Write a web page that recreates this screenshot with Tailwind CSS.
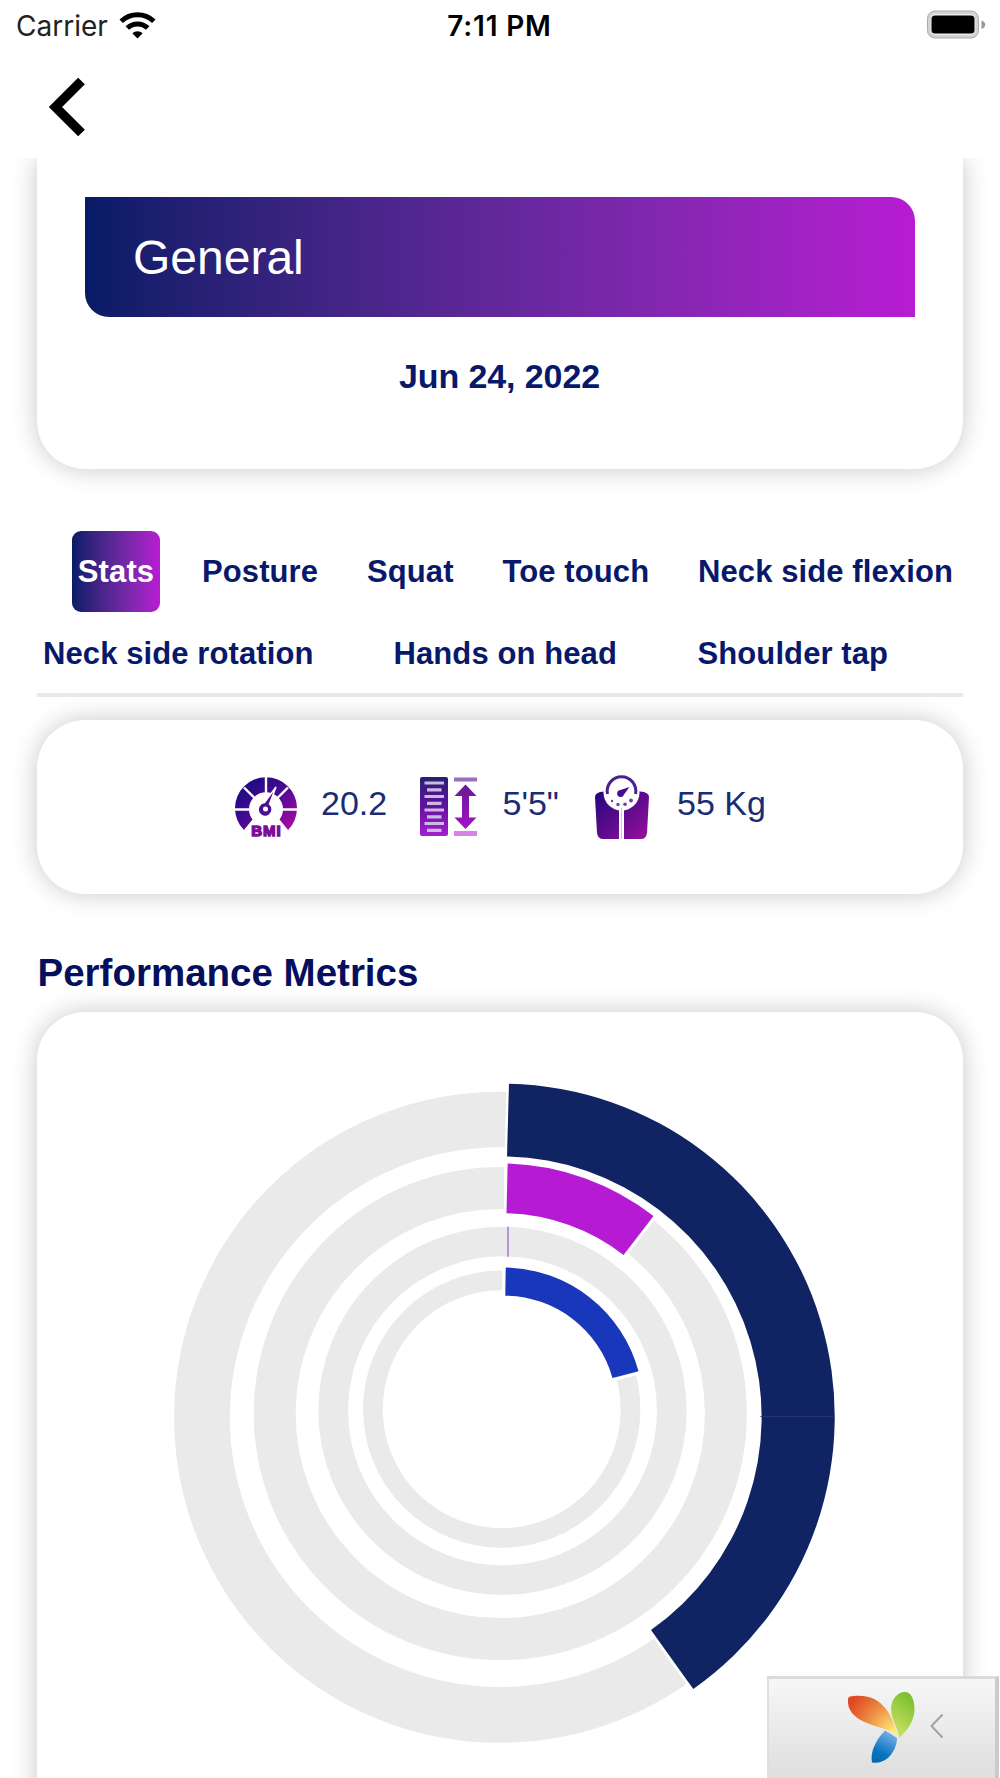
<!DOCTYPE html>
<html lang="en">
<head>
  <meta charset="UTF-8" />
  <meta name="viewport" content="width=device-width, initial-scale=1.0" />
  <title>General - Stats</title>
  <script src="https://cdn.jsdelivr.net/npm/@tailwindcss/browser@4"></script>
</head>
<body class="relative h-[1778px] w-[1000px] overflow-hidden bg-white font-['Liberation_Sans',Arial,sans-serif] text-[#08196b]">
  <!-- status bar + back button -->
  <header class="h-[158px]">
    <div class="grid h-[52px] grid-cols-[1fr_auto_1fr] items-center pl-[16px] pr-[14px] font-['Inter',sans-serif] text-black">
      <div class="flex items-center gap-[11px]">
        <span class="text-[28px] leading-none text-[#222]">Carrier</span>
        <svg class="-mt-[3px] h-[28px] w-[37px]" viewBox="0 0 37 28" fill="none" stroke="#000" stroke-width="5">
          <path d="M2.200 10.200a23.500 23.500 0 0 1 32.600 0" />
          <path d="M8.300 17a14.800 14.800 0 0 1 20.400 0" />
          <path d="M18.500 27.600l-5.200-5.300a7.800 7.800 0 0 1 10.400 0z" fill="#000" stroke="none" />
        </svg>
      </div>
      <span class="mr-[3px] text-[28px] leading-none font-semibold tracking-[0.800px]">7:11 PM</span>
      <svg class="-mt-[2px] h-[30px] w-[60px] justify-self-end" viewBox="0 0 60 30">
        <rect x="1.500" y="1" width="51" height="27" rx="7.500" fill="#d2d2d2" stroke="#aaa" stroke-width="1" />
        <rect x="4.500" y="4" width="45" height="21" rx="5" fill="#eee" />
        <rect x="5.500" y="5.500" width="43" height="18" rx="3.500" fill="#000" />
        <path d="M55.500 10.500c5 1.500 5 7 0 8.500z" fill="#999" />
      </svg>
    </div>
    <button class="mt-[24px] ml-[48px] block">
      <svg class="h-[62px] w-[40px]" viewBox="0 0 40 62" fill="none" stroke="#000" stroke-width="9.500">
        <path d="M33.500 5L7.500 31 33.500 57" />
      </svg>
    </button>
  </header>

  <main class="h-[1620px] overflow-hidden pr-[37.500px] pl-[36.500px]">
    <section class="h-[311px] rounded-b-[48px] bg-white px-[48px] pt-[38.500px] shadow-[0_0_26px_rgba(0,0,0,0.22)]">
      <div class="flex h-[120.500px] items-center rounded-tr-[24px] rounded-bl-[24px] bg-linear-to-r from-[#071b66] to-[#b81bd3] pt-[2px] pl-[48.500px] text-[48px] text-white">General</div>
      <p class="mt-[39px] text-center text-[34px] leading-[40px] font-bold tracking-[-0.100px]">Jun 24, 2022</p>
    </section>

    <nav class="mt-[61.500px] h-[166.500px] border-b-4 border-[#e7e9ed] text-[31px] leading-[40px] font-bold tracking-[0.100px] whitespace-nowrap">
      <div class="flex h-[82px] items-center">
        <a class="ml-[35.500px] flex h-[81px] w-[88px] items-center justify-center rounded-[9px] bg-linear-to-r from-[#071b66] to-[#b81bd3] text-white">Stats</a>
        <a class="ml-[42px] w-[165px]">Posture</a>
        <a class="w-[135.500px]">Squat</a>
        <a class="w-[195.500px]">Toe touch</a>
        <a>Neck side flexion</a>
      </div>
      <div class="mt-[21.500px] flex">
        <a class="ml-[6.500px] w-[350.500px]">Neck side rotation</a>
        <a class="w-[304px]">Hands on head</a>
        <a>Shoulder tap</a>
      </div>
    </nav>

    <section class="mt-[22.500px] flex h-[174px] items-center rounded-[48px] bg-white pl-[197.500px] text-[34px] whitespace-nowrap text-[#1a2c74] shadow-[0_0_26px_rgba(0,0,0,0.22)]">
      <svg class="h-[64px] w-[64px]" viewBox="0 0 64 64">
        <defs>
          <linearGradient id="bmi" x1="0" y1="0" x2="1" y2="1"><stop offset="0" stop-color="#0b0a80" /><stop offset="0.500" stop-color="#4a0a93" /><stop offset="1" stop-color="#b40aa4" /></linearGradient>
        </defs>
        <path d="M9.900 55A31 31 0 1 1 54.100 55L45.500 44.500A17 17 0 1 0 18.500 44.500z" fill="url(#bmi)" />
        <path d="M32 0v20M0 34.500h17M47 34.500h17M10 12.500l12 12M54 12.500l-12 12" stroke="#fff" stroke-width="2.400" />
        <path d="M42 12l-6.500 17a7 7 0 1 1-5-1.500z" fill="#4e0e92" stroke="#fff" stroke-width="1.500" />
        <circle cx="31.500" cy="34" r="2.500" fill="#fff" />
        <text x="32.500" y="60.500" text-anchor="middle" font-family="Liberation Sans" font-size="15" font-weight="700" letter-spacing="1" fill="#7c0c9a" stroke="#7c0c9a" stroke-width="1.400">BMI</text>
      </svg>
      <span class="mb-[6px] ml-[23px] w-[99px]">20.2</span>
      <svg class="h-[64px] w-[60px]" viewBox="0 0 60 64">
        <defs>
          <linearGradient id="ht" gradientUnits="userSpaceOnUse" x1="0" y1="3" x2="0" y2="61"><stop offset="0" stop-color="#262172" /><stop offset="0.500" stop-color="#6310a0" /><stop offset="1" stop-color="#a51fd0" /></linearGradient>
          <linearGradient id="arrow" gradientUnits="userSpaceOnUse" x1="0" y1="3" x2="0" y2="61"><stop offset="0" stop-color="#5a1d88" /><stop offset="1" stop-color="#b10fd0" /></linearGradient>
        </defs>
        <rect x="0" y="2" width="28" height="59" rx="2" fill="url(#ht)" />
        <path d="M4.500 8h19.500M4.500 21.500h19.500M4.500 35h19.500M4.500 48.500h19.500" stroke="#cdb9e2" stroke-width="3.200" />
        <path d="M7 14.800h14.500M7 28.300h14.500M7 41.800h14.500M7 55.300h14.500" stroke="#cdb9e2" stroke-width="3.200" />
        <path d="M34 4.500h23" stroke="#9a6fb8" stroke-width="4" />
        <path d="M34 58.500h23" stroke="#d884e6" stroke-width="5" />
        <path d="M45.500 9.500l11 11.500h-7.500v21.500h7.500L45.500 54l-11-11.500H42V21h-7.500z" fill="url(#arrow)" />
      </svg>
      <span class="mb-[6px] ml-[22.500px] w-[90.500px]">5'5"</span>
      <svg class="h-[66px] w-[58px]" viewBox="0 0 58 66">
        <defs>
          <linearGradient id="wt" x1="0" y1="0" x2="1" y2="1"><stop offset="0" stop-color="#21067d" /><stop offset="1" stop-color="#9a0f9c" /></linearGradient>
        </defs>
        <path d="M2 23q0-5 9-5.500h36q9 .5 9 5.500L54 59q-1 6-6 6H10q-5 0-6-6z" fill="url(#wt)" />
        <circle cx="28.500" cy="18.500" r="18" fill="#fff" />
        <path d="M28.500 32v33" stroke="#fff" stroke-width="5" />
        <path d="M28.500 34v31" stroke="#d9bde3" stroke-width="1" />
        <path d="M14.500 20a14.300 14.300 0 1 1 28 0" fill="none" stroke="#4b218f" stroke-width="3" />
        <path d="M36.500 13l-5.500 7.500a3.500 3.500 0 1 1-3.500-4.500z" fill="#4a0b8e" />
        <g fill="#7a3aa8"><circle cx="19" cy="27" r="1.200" /><circle cx="25" cy="30.500" r="1.700" /><circle cx="32" cy="30.300" r="1.800" /><circle cx="38" cy="26.500" r="1.900" /></g>
      </svg>
      <span class="mb-[6px] ml-[26px]">55 Kg</span>
    </section>

    <h2 class="mt-[56px] pl-px text-[38.500px] leading-[46px] font-bold text-[#060f5e]">Performance Metrics</h2>

    <section class="mt-[16px] h-[900px] rounded-[48px] bg-white shadow-[0_0_26px_rgba(0,0,0,0.22)]">
      <!-- viewBox is in page coordinates -->
      <svg class="mx-auto block h-[700px] w-[700px]" viewBox="150 1012 700 700" overflow="visible">
        <g fill="none" stroke="#eaeaea">
          <circle cx="499.700" cy="1417.200" r="297.700" stroke-width="55.700" />
          <circle cx="500.300" cy="1413.500" r="225.600" stroke-width="42" />
          <circle cx="502.500" cy="1410.800" r="169.300" stroke-width="29.700" />
          <circle cx="501.700" cy="1409.200" r="128.800" stroke-width="19.700" />
        </g>
        <g stroke="#fff" stroke-width="2.500">
          <path d="M507.500 1088L506 1150M505.500 1164V1212M503.500 1268V1294" />
          <path d="M692 1690L650 1631M655 1217L625 1256M640 1373L612 1380" />
        </g>
        <path d="M509 1083.700A333 333 0 0 1 693.300 1689L651 1630A260.500 260.500 0 0 0 507 1156.500z" fill="#102463" />
        <path d="M760.500 1416.500H833.500" stroke="#24356f" stroke-width="1" />
        <path d="M507.700 1163.500A250 250 0 0 1 653.500 1216L623.500 1255A200 200 0 0 0 506.500 1213.300z" fill="#b61bd3" />
        <path d="M508 1226.700V1256.700" stroke="#bd93d6" stroke-width="2" />
        <path d="M505.800 1267.500A140.500 140.500 0 0 1 638.500 1371.300L612.500 1378A112.500 112.500 0 0 0 505.300 1295.700z" fill="#1937ba" />
      </svg>
    </section>
  </main>

  <!-- debug toolbar, pinned over the page -->
  <div class="absolute right-[1.500px] bottom-0 flex h-[102.500px] w-[231.500px] items-start border-t-3 border-r-4 border-l-2 border-t-[#dadada] border-r-[#cbcbcb] border-l-[#dedede] bg-linear-to-b from-[#f7f7f7] to-[#dedede] pt-[12px] pl-[78px]">
    <svg class="h-[76px] w-[72px]" viewBox="0 0 72 76">
      <defs>
        <radialGradient id="leafRed" gradientUnits="userSpaceOnUse" cx="48" cy="42" r="52"><stop offset="0.050" stop-color="#ffe877" /><stop offset="0.550" stop-color="#ee8f45" /><stop offset="1" stop-color="#e04a22" /></radialGradient>
        <linearGradient id="leafGreen" x1="0.300" y1="1" x2="0.700" y2="0"><stop offset="0" stop-color="#cfe266" /><stop offset="1" stop-color="#78be2c" /></linearGradient>
        <linearGradient id="leafBlue" x1="0.700" y1="0" x2="0.300" y2="1"><stop offset="0" stop-color="#7db3e5" /><stop offset="0.700" stop-color="#0b74c2" /><stop offset="1" stop-color="#0868b0" /></linearGradient>
      </defs>
      <path d="M1 8C1 6 3 5 7 5C22 3.500 32 9 39 18C45 26 48 35 50.500 45C43 38 32 37 20 32C7 27 0 19 1 8z" fill="url(#leafRed)" />
      <path d="M57 1C64 0.500 67.500 8 67.500 18C67.500 30 60 40 52 47C51 36 44 29 44 17C45 7 51 1.500 57 1z" fill="url(#leafGreen)" />
      <path d="M38 39.500C42 42 46 44 50 47C50 55 46 62 41 67C36 71 31 72.500 25 71.500C23.500 62 27 55 31 48C33 45 36 42 38 39.500z" fill="url(#leafBlue)" />
    </svg>
    <svg class="mt-[21px] ml-[10px] h-[28px] w-[16px]" viewBox="0 0 16 28" fill="none" stroke="#a3a3a3" stroke-width="2">
      <path d="M13.500 2.500L2.500 14 13.500 25.500" />
    </svg>
  </div>
</body>
</html>
